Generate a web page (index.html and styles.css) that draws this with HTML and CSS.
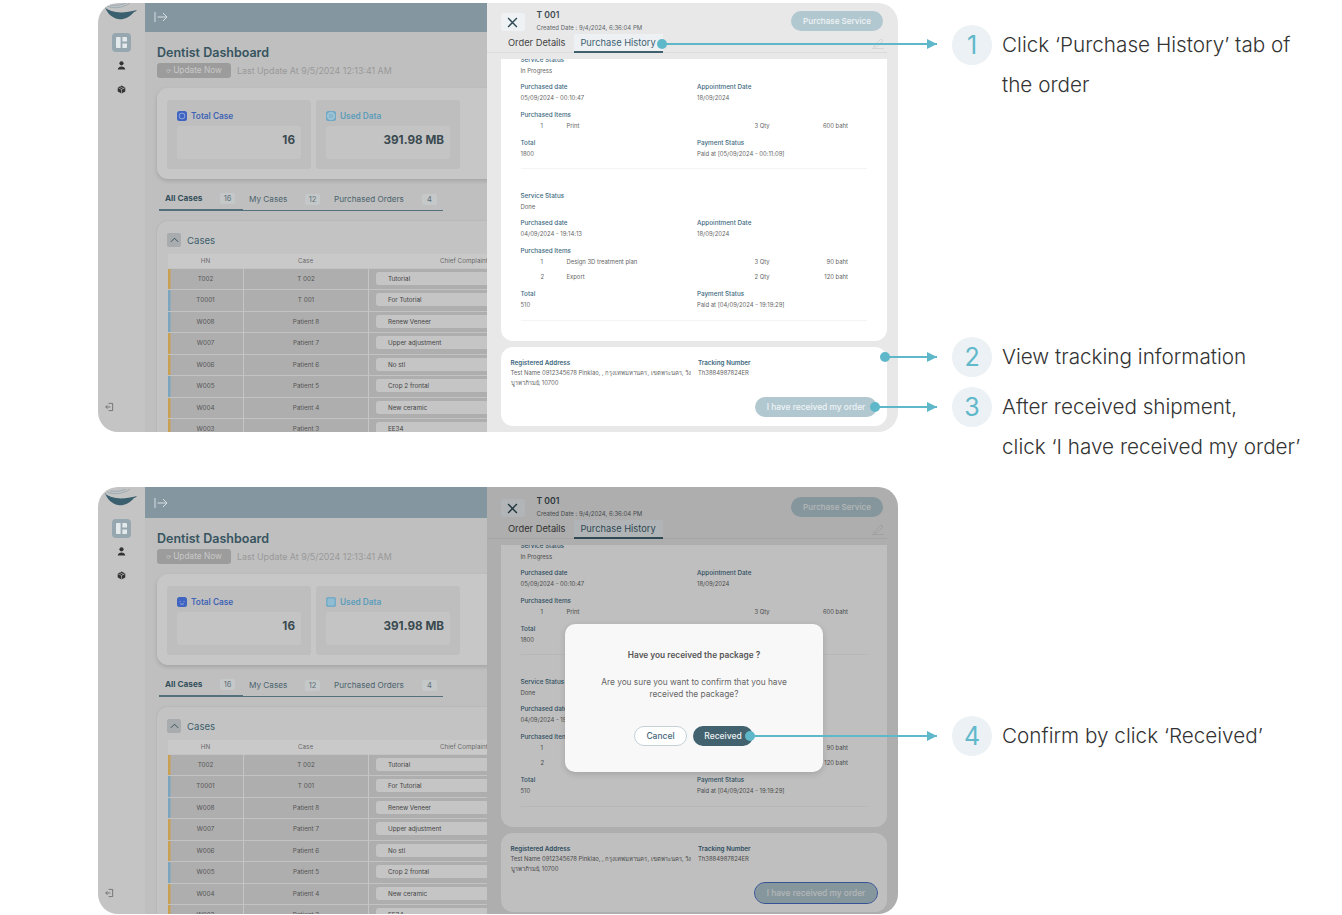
FILE: index.html
```html
<!DOCTYPE html>
<html lang="en">
<head>
<meta charset="utf-8">
<title>Purchase History guide</title>
<link rel="stylesheet" href="styles.css">
</head>
<body>
<main class="page">

<section class="row row-one">
  <div class="shot shot-one">
    <div class="app">
      <aside class="sidebar">
        <svg class="logo" viewBox="0 0 34 18"><path d="M1 4c6 6 17 7 32 3-1 1-2 2-3 2-5 6-11 8-16 7C8 15 3 10 1 4z" fill="#3a5f6e"/><path d="M2 5c8 5 20 3 30-1" fill="none" stroke="#c4c4c4" stroke-width=".9"/><path d="M3 3c7 3 16 2 23-3M6 2c6 1 12 0 16-2" fill="none" stroke="#8ba2ae" stroke-width=".7"/></svg>
        <span class="nav-active"><svg viewBox="0 0 12 12" class="nav-glyph"><path d="M0 1a1 1 0 0 1 1-1h4v12H1a1 1 0 0 1-1-1zM7 0h4a1 1 0 0 1 1 1v4H7zM7 7h5v4a1 1 0 0 1-1 1H7z" fill="#e4e9ec"/></svg></span>
        <svg class="nav-icon" viewBox="0 0 10 10"><circle cx="5" cy="2.6" r="2.3" fill="#333"/><path d="M.8 9.5C1 6.8 3 6 5 6s4 .8 4.200 3.500z" fill="#333"/></svg>
        <svg class="nav-icon nav-box" viewBox="0 0 10 10"><path d="M5 .5 9.200 2.700v4.600L5 9.500.8 7.300V2.700z" fill="#333"/><path d="M.8 2.700 5 5l4.200-2.300M5 5v4.500M3 1.600l4.200 2.300" stroke="#c3c3c3" stroke-width=".7" fill="none"/></svg>
        <svg class="nav-exit" viewBox="0 0 10 10"><path d="M4 1h4.500v8H4M6 5H.8M2.800 3 .8 5l2 2" fill="none" stroke="#666" stroke-width=".9"/></svg>
      </aside>
      <div class="main">
        <header class="topbar"><svg class="expand" viewBox="0 0 14 12"><path d="M1 1v10M3.500 6h9.500M9 2l4 4-4 4" fill="none" stroke="#d8dfe2" stroke-width="1"/></svg></header>
        <div class="content">
          <h1 class="title">Dentist Dashboard</h1>
          <div class="update-row"><span class="update-btn"><span class="spin">⟳</span>Update Now</span><span class="update-text">Last Update At 9/5/2024 12:13:41 AM</span></div>
          <div class="stats-card">
            <div class="stat"><div class="stat-label stat-blue"><svg class="stat-icon" viewBox="0 0 10 10"><rect width="10" height="10" rx="2.500" fill="#3f63c0"/><rect x="2.300" y="2.300" width="5.400" height="5.400" rx="2" fill="none" stroke="#a9bbe6" stroke-width=".8"/></svg>Total Case</div><div class="stat-value">16</div></div>
            <div class="stat"><div class="stat-label stat-teal"><svg class="stat-icon" viewBox="0 0 10 10"><rect width="10" height="10" rx="2.500" fill="#6ba6c2"/><rect x="2" y="2" width="6" height="6" rx="1" fill="none" stroke="#c6dbe5" stroke-width=".8"/><path d="M4 .5v9M6 .5v9M.5 4h9M.5 6h9" stroke="#c6dbe5" stroke-width=".4"/></svg>Used Data</div><div class="stat-value">391.98 MB</div></div>
          </div>
          <nav class="tabs">
            <span class="tab tab-on tab-a">All Cases<i class="chip">16</i></span>
            <span class="tab tab-b">My Cases<i class="chip">12</i></span>
            <span class="tab tab-c">Purchased Orders<i class="chip">4</i></span>
          </nav>
          <div class="cases">
            <div class="cases-head"><span class="toggle"><svg viewBox="0 0 10 6"><path d="M1 5l4-4 4 4" fill="none" stroke="#2f4a55" stroke-width="1"/></svg></span>Cases</div>
            <div class="table">
              <div class="thead"><span>HN</span><span>Case</span><span class="th-long">Chief Complaint</span></div>
              <div class="tr tr-o"><span>T002</span><span>T 002</span><span class="cc"><b>Tutorial</b></span></div>
              <div class="tr tr-b"><span>T0001</span><span>T 001</span><span class="cc"><b>For Tutorial</b></span></div>
              <div class="tr tr-b"><span>W008</span><span>Patient 8</span><span class="cc"><b>Renew Veneer</b></span></div>
              <div class="tr tr-o"><span>W007</span><span>Patient 7</span><span class="cc"><b>Upper adjustment</b></span></div>
              <div class="tr tr-o"><span>W006</span><span>Patient 6</span><span class="cc"><b>No stl</b></span></div>
              <div class="tr tr-b"><span>W005</span><span>Patient 5</span><span class="cc"><b>Crop 2 frontal</b></span></div>
              <div class="tr tr-o"><span>W004</span><span>Patient 4</span><span class="cc"><b>New ceramic</b></span></div>
              <div class="tr tr-o"><span>W003</span><span>Patient 3</span><span class="cc"><b>EE34</b></span></div>
            </div>
          </div>
        </div>
      </div>
      <div class="panel">
        <div class="panel-head">
          <span class="close"><svg viewBox="0 0 10 10"><path d="M1 1l8 8M9 1 1 9" stroke="#2f4a55" stroke-width="1.300" fill="none"/></svg></span>
          <div class="order-id"><strong>T 001</strong><small>Created Date : 9/4/2024, 6:36:04 PM</small></div>
          <span class="buy">Purchase Service</span>
        </div>
        <div class="panel-tabs">
          <span class="ptab">Order Details</span>
          <span class="ptab ptab-on">Purchase History</span>
          <svg class="pencil" viewBox="0 0 14 12"><path d="M3 9 10 2l2 2-7 6H2zM1 11.500h12" fill="none" stroke="#d0d0d0" stroke-width=".8"/></svg>
        </div>
        <div class="orders">
          <div class="order order-first">
            <div class="f"><em>Service Status</em><p>In Progress</p></div>
            <div class="two"><div class="f"><em>Purchased date</em><p>05/09/2024 - 00:10:47</p></div><div class="f"><em>Appointment Date</em><p>18/09/2024</p></div></div>
            <div class="f"><em>Purchased Items</em><div class="item"><span>1</span><span>Print</span><span>3 Qty</span><span>600 baht</span></div></div>
            <div class="two"><div class="f"><em>Total</em><p>1800</p></div><div class="f"><em>Payment Status</em><p>Paid at [05/09/2024 - 00:11:09]</p></div></div>
          </div>
          <div class="order">
            <div class="f"><em>Service Status</em><p>Done</p></div>
            <div class="two"><div class="f"><em>Purchased date</em><p>04/09/2024 - 19:14:13</p></div><div class="f"><em>Appointment Date</em><p>18/09/2024</p></div></div>
            <div class="f"><em>Purchased Items</em><div class="item"><span>1</span><span>Design 3D treatment plan</span><span>3 Qty</span><span>90 baht</span></div><div class="item item-next"><span>2</span><span>Export</span><span>2 Qty</span><span>120 baht</span></div></div>
            <div class="two"><div class="f"><em>Total</em><p>510</p></div><div class="f"><em>Payment Status</em><p>Paid at [04/09/2024 - 19:19:29]</p></div></div>
          </div>
        </div>
        <div class="ship">
          <div class="ship-grid">
            <div class="f"><em>Registered Address</em><p>Test Name 0912345678 Pinklao, , กรุงเทพมหานคร, เขตพระนคร, วัง<br>บูรพาภิรมย์, 10700</p></div>
            <div class="f"><em>Tracking Number</em><p>Th3884987824ER</p></div>
          </div>
          <span class="got">I have received my order</span>
        </div>
      </div>
    </div>
  </div>
  <div class="steps steps-one">
    <div class="step step-1"><span class="num">1</span><p>Click ‘Purchase History’ tab of<br>the order</p></div>
    <div class="step step-2"><span class="num">2</span><p>View tracking information</p></div>
    <div class="step step-3"><span class="num">3</span><p>After received shipment,<br>click ‘I have received my order’</p></div>
  </div>
  <span class="callout c1"></span>
  <span class="callout c2"></span>
  <span class="callout c3"></span>
</section>

<section class="row row-two">
  <div class="shot shot-two">
    <div class="app">
      <aside class="sidebar">
        <svg class="logo" viewBox="0 0 34 18"><path d="M1 4c6 6 17 7 32 3-1 1-2 2-3 2-5 6-11 8-16 7C8 15 3 10 1 4z" fill="#3a5f6e"/><path d="M2 5c8 5 20 3 30-1" fill="none" stroke="#c4c4c4" stroke-width=".9"/><path d="M3 3c7 3 16 2 23-3M6 2c6 1 12 0 16-2" fill="none" stroke="#8ba2ae" stroke-width=".7"/></svg>
        <span class="nav-active"><svg viewBox="0 0 12 12" class="nav-glyph"><path d="M0 1a1 1 0 0 1 1-1h4v12H1a1 1 0 0 1-1-1zM7 0h4a1 1 0 0 1 1 1v4H7zM7 7h5v4a1 1 0 0 1-1 1H7z" fill="#e4e9ec"/></svg></span>
        <svg class="nav-icon" viewBox="0 0 10 10"><circle cx="5" cy="2.6" r="2.3" fill="#333"/><path d="M.8 9.5C1 6.8 3 6 5 6s4 .8 4.200 3.500z" fill="#333"/></svg>
        <svg class="nav-icon nav-box" viewBox="0 0 10 10"><path d="M5 .5 9.200 2.700v4.600L5 9.500.8 7.300V2.700z" fill="#333"/><path d="M.8 2.700 5 5l4.200-2.300M5 5v4.500M3 1.600l4.200 2.300" stroke="#c3c3c3" stroke-width=".7" fill="none"/></svg>
        <svg class="nav-exit" viewBox="0 0 10 10"><path d="M4 1h4.500v8H4M6 5H.8M2.800 3 .8 5l2 2" fill="none" stroke="#666" stroke-width=".9"/></svg>
      </aside>
      <div class="main">
        <header class="topbar"><svg class="expand" viewBox="0 0 14 12"><path d="M1 1v10M3.500 6h9.500M9 2l4 4-4 4" fill="none" stroke="#d8dfe2" stroke-width="1"/></svg></header>
        <div class="content">
          <h1 class="title">Dentist Dashboard</h1>
          <div class="update-row"><span class="update-btn"><span class="spin">⟳</span>Update Now</span><span class="update-text">Last Update At 9/5/2024 12:13:41 AM</span></div>
          <div class="stats-card">
            <div class="stat"><div class="stat-label stat-blue"><svg class="stat-icon" viewBox="0 0 10 10"><rect width="10" height="10" rx="2.500" fill="#3f63c0"/><path d="M3 4v1M7 4v1M3 6.500c1 1 3 1 4 0" fill="none" stroke="#a9bbe6" stroke-width=".8"/></svg>Total Case</div><div class="stat-value">16</div></div>
            <div class="stat"><div class="stat-label stat-teal"><svg class="stat-icon" viewBox="0 0 10 10"><rect width="10" height="10" rx="2.500" fill="#6ba6c2"/><path d="M3 .5v9M5 .5v9M7 .5v9M.5 3h9M.5 5h9M.5 7h9" stroke="#c6dbe5" stroke-width=".5"/></svg>Used Data</div><div class="stat-value">391.98 MB</div></div>
          </div>
          <nav class="tabs">
            <span class="tab tab-on tab-a">All Cases<i class="chip">16</i></span>
            <span class="tab tab-b">My Cases<i class="chip">12</i></span>
            <span class="tab tab-c">Purchased Orders<i class="chip">4</i></span>
          </nav>
          <div class="cases">
            <div class="cases-head"><span class="toggle"><svg viewBox="0 0 10 6"><path d="M1 5l4-4 4 4" fill="none" stroke="#2f4a55" stroke-width="1"/></svg></span>Cases</div>
            <div class="table">
              <div class="thead"><span>HN</span><span>Case</span><span class="th-long">Chief Complaint</span></div>
              <div class="tr tr-o"><span>T002</span><span>T 002</span><span class="cc"><b>Tutorial</b></span></div>
              <div class="tr tr-b"><span>T0001</span><span>T 001</span><span class="cc"><b>For Tutorial</b></span></div>
              <div class="tr tr-b"><span>W008</span><span>Patient 8</span><span class="cc"><b>Renew Veneer</b></span></div>
              <div class="tr tr-o"><span>W007</span><span>Patient 7</span><span class="cc"><b>Upper adjustment</b></span></div>
              <div class="tr tr-o"><span>W006</span><span>Patient 6</span><span class="cc"><b>No stl</b></span></div>
              <div class="tr tr-b"><span>W005</span><span>Patient 5</span><span class="cc"><b>Crop 2 frontal</b></span></div>
              <div class="tr tr-o"><span>W004</span><span>Patient 4</span><span class="cc"><b>New ceramic</b></span></div>
              <div class="tr tr-o"><span>W003</span><span>Patient 3</span><span class="cc"><b>EE34</b></span></div>
            </div>
          </div>
        </div>
      </div>
      <div class="panel">
        <div class="panel-head">
          <span class="close"><svg viewBox="0 0 10 10"><path d="M1 1l8 8M9 1 1 9" stroke="#2f4a55" stroke-width="1.300" fill="none"/></svg></span>
          <div class="order-id"><strong>T 001</strong><small>Created Date : 9/4/2024, 6:36:04 PM</small></div>
          <span class="buy">Purchase Service</span>
        </div>
        <div class="panel-tabs">
          <span class="ptab">Order Details</span>
          <span class="ptab ptab-on">Purchase History</span>
          <svg class="pencil" viewBox="0 0 14 12"><path d="M3 9 10 2l2 2-7 6H2zM1 11.500h12" fill="none" stroke="#d0d0d0" stroke-width=".8"/></svg>
        </div>
        <div class="orders">
          <div class="order order-first">
            <div class="f"><em>Service Status</em><p>In Progress</p></div>
            <div class="two"><div class="f"><em>Purchased date</em><p>05/09/2024 - 00:10:47</p></div><div class="f"><em>Appointment Date</em><p>18/09/2024</p></div></div>
            <div class="f"><em>Purchased Items</em><div class="item"><span>1</span><span>Print</span><span>3 Qty</span><span>600 baht</span></div></div>
            <div class="two"><div class="f"><em>Total</em><p>1800</p></div><div class="f"><em>Payment Status</em><p>Paid at [05/09/2024 - 00:11:09]</p></div></div>
          </div>
          <div class="order">
            <div class="f"><em>Service Status</em><p>Done</p></div>
            <div class="two"><div class="f"><em>Purchased date</em><p>04/09/2024 - 19:14:13</p></div><div class="f"><em>Appointment Date</em><p>18/09/2024</p></div></div>
            <div class="f"><em>Purchased Items</em><div class="item"><span>1</span><span>Design 3D treatment plan</span><span>3 Qty</span><span>90 baht</span></div><div class="item item-next"><span>2</span><span>Export</span><span>2 Qty</span><span>120 baht</span></div></div>
            <div class="two"><div class="f"><em>Total</em><p>510</p></div><div class="f"><em>Payment Status</em><p>Paid at [04/09/2024 - 19:19:29]</p></div></div>
          </div>
        </div>
        <div class="ship">
          <div class="ship-grid">
            <div class="f"><em>Registered Address</em><p>Test Name 0912345678 Pinklao, , กรุงเทพมหานคร, เขตพระนคร, วัง<br>บูรพาภิรมย์, 10700</p></div>
            <div class="f"><em>Tracking Number</em><p>Th3884987824ER</p></div>
          </div>
          <span class="got got-focus">I have received my order</span>
        </div>
        <div class="dim">
          <div class="modal">
            <h2>Have you received the package ?</h2>
            <p>Are you sure you want to confirm that you have<br>received the package?</p>
            <div class="modal-actions"><span class="cancel">Cancel</span><span class="received">Received</span></div>
          </div>
        </div>
      </div>
    </div>
  </div>
  <div class="steps steps-two">
    <div class="step step-4"><span class="num">4</span><p>Confirm by click ‘Received’</p></div>
  </div>
  <span class="callout c4"></span>
</section>

</main>
</body>
</html>
```
FILE: styles.css
```css
* { box-sizing: border-box; }
html, body { margin: 0; padding: 0; background: #fff; overflow: hidden; }
body { font-family: Inter, "Noto Sans", "Noto Sans CJK SC", "DejaVu Sans", sans-serif; color: #333; }
h1, h2, p { margin: 0; }
em, i { font-style: normal; }

.page { padding: 3px 0 0 98px; height: 915px; }
.row { position: relative; display: grid; grid-template-columns: 800px 1fr; column-gap: 54px; align-items: start; }
.row-one { height: 429px; }
.row-two { height: 427px; margin-top: 55px; }

/* screenshot frames */
.shot { position: relative; overflow: hidden; border-radius: 20px; }
.shot-one { height: 429px; }
.shot-two { height: 427px; }
.shot-one .app { margin-top: -2px; }
.app { display: flex; width: 800px; height: 432px; }

/* sidebar */
.sidebar { position: relative; width: 47px; flex: none; background: #c4c4c4; display: flex; flex-direction: column; align-items: center; padding-top: 2px; }
.logo { width: 34px; height: 18px; margin-left: -1px; }
.nav-active { width: 19px; height: 19px; margin-top: 12px; border-radius: 4px; background: #96a7b0; display: flex; align-items: center; justify-content: center; }
.nav-glyph { width: 11px; height: 11px; }
.nav-icon { width: 9px; height: 9px; margin-top: 9px; }
.nav-box { margin-top: 15px; }
.nav-exit { position: absolute; left: 7px; top: 401px; width: 9px; height: 10px; }

/* main column */
.main { width: 342px; flex: none; overflow: hidden; background: #bfbfbf; }
.topbar { height: 31px; background: #84969f; display: flex; align-items: center; padding-left: 9px; }
.expand { width: 14px; height: 12px; }
.content { padding: 14px 0 0 12px; }
.title { font-size: 12.500px; line-height: 13px; font-weight: 600; color: #37545f; }
.update-row { display: flex; align-items: center; margin-top: 4px; height: 15px; }
.update-btn { display: flex; justify-content: center; gap: 2px; width: 74px; height: 15px; border-radius: 3px; background: #9c9c9c; color: #c8c8c8; font-size: 8.300px; line-height: 15px; white-space: nowrap; }
.spin { font-size: 6px; }
.update-text { margin-left: 6px; font-size: 8.850px; color: #999; white-space: nowrap; }

.stats-card { display: flex; gap: 5px; width: 340px; height: 91px; margin-top: 10px; padding: 12px 10px; border-radius: 11px 0 0 11px; background: #c7c7c7; box-shadow: 0 2px 4px rgba(0,0,0,.14); }
.stat { width: 144px; height: 69px; border-radius: 3px; background: #bebebe; padding: 10px 10px; flex: none; }
.stat-label { display: flex; align-items: center; gap: 4px; height: 11px; font-size: 8.300px; font-weight: 600; white-space: nowrap; }
.stat-blue { color: #3f63b5; }
.stat-teal { color: #5c9dbb; }
.stat-icon { width: 10px; height: 10px; flex: none; }
.stat-value { height: 33px; margin-top: 5px; border-radius: 3px; background: #c4c4c4; text-align: right; padding-right: 6px; font-size: 11.700px; line-height: 29px; font-weight: 700; color: #3a4a50; }

.tabs { display: flex; width: 284px; height: 23px; margin: 9px 0 0 2px; border-bottom: 1px solid #54707c; }
.tab { display: flex; align-items: center; justify-content: space-between; height: 23px; padding: 0 8px 1px 6px; font-size: 8.200px; color: #4b636d; white-space: nowrap; }
.tab-a { width: 84px; }
.tab-b { width: 85px; }
.tab-c { width: 115px; padding-right: 6px; }
.tab-on { font-weight: 700; color: #33505b; border-bottom: 2px solid #54707c; }
.chip { width: 15px; height: 11px; border-radius: 2px; background: #c4c8c9; font-size: 7.500px; line-height: 11px; text-align: center; font-weight: 400; color: #5c6f77; }

.cases { width: 340px; margin-top: 10px; padding: 12px 0 0 11px; border-radius: 10px 0 0 0; background: #c3c3c3; box-shadow: 0 0 2px rgba(0,0,0,.12); }
.cases-head { display: flex; align-items: center; gap: 6px; height: 14px; margin-left: -1px; font-size: 9.600px; color: #3d5f6c; }
.toggle { width: 14px; height: 14px; border-radius: 2px; background: #a8acae; display: flex; align-items: center; justify-content: center; }
.toggle svg { width: 9px; height: 6px; }
.table { margin: 7px 0 0 0; }
.thead, .tr { display: grid; grid-template-columns: 75px 125px 240px; text-align: center; font-size: 6.300px; color: #555; white-space: nowrap; }
.thead { height: 13.800px; line-height: 14.800px; background: #c9c9c9; color: #6a6a6a; }
.th-long { text-align: left; padding-left: 72px; }
.tr { height: 20.500px; line-height: 20.500px; margin-top: 1px; background: #aeaeae; }
.tr > span + span { border-left: 1px solid #c6c6c6; }
.tr-o { box-shadow: inset 2.500px 0 0 #c9a052; }
.tr-b { box-shadow: inset 2.500px 0 0 #7ba5be; }
.cc { padding: 3px 0 0 7px; text-align: left; }
.cc b { display: block; height: 13px; line-height: 14.500px; padding-left: 12px; border-radius: 3px; background: #c5c5c5; color: #444; font-weight: 400; }

/* right panel */
.panel { position: relative; width: 411px; flex: none; display: flex; flex-direction: column; padding: 0 11px 0 13.500px; background: #e8e8e8; }
.panel-head { display: flex; height: 33px; align-items: flex-start; }
.close { width: 24px; height: 18px; margin: 12px 0 0 0; border-radius: 3px; background: #eef2f4; display: flex; align-items: center; justify-content: center; flex: none; }
.close svg { width: 11px; height: 11px; }
.order-id { margin: 8px 0 0 12px; display: flex; flex-direction: column; }
.order-id strong { font-size: 8.600px; line-height: 12px; font-weight: 600; color: #3d4b50; }
.order-id small { margin-top: 2px; font-size: 6px; line-height: 9px; color: #5e6669; }
.buy { margin: 10px 4px 0 auto; width: 92px; height: 20px; border-radius: 10px; background: #b2c8d1; color: #f0f4f5; font-size: 8.100px; line-height: 21px; text-align: center; font-weight: 500; }
.panel-tabs { position: relative; display: flex; height: 19px; margin-left: -13.500px; padding-left: 21px; border-bottom: 1px solid #dcdcdc; width: 400px; }
.ptab { font-size: 9.300px; line-height: 18px; color: #444; white-space: nowrap; }
.ptab-on { width: 89px; margin-left: 8px; text-align: center; height: 19px; color: #3f6272; background: #edf1f3; border-bottom: 2px solid #40606e; }
.pencil { position: absolute; right: 2px; top: 3px; width: 14px; height: 12px; }

.orders { height: 282px; margin-top: 6px; overflow: hidden; border-radius: 0 0 12px 12px; background: #fff; padding: 0 20px; }
.order { padding-top: 27px; height: 152px; border-bottom: 1px solid #f4f4f4; }
.order + .order { height: 152px; padding-top: 20.500px; }
.order-first { margin-top: -5.500px; height: 115.500px; padding-top: 0; }
.f { margin-bottom: 5.500px; }
.f:has(.item) { margin-bottom: 6.500px; }
.f em, .f p, .item { display: block; font-size: 5.900px; line-height: 11px; white-space: nowrap; }
.f em { color: #3e6a80; font-weight: 500; font-size: 6.300px; line-height: 12px; }
.f p { color: #666; line-height: 10px; }
.two { display: grid; grid-template-columns: 176.500px 1fr; }
.item { display: grid; grid-template-columns: 26px 188px 50px 1fr; height: 10px; line-height: 10px; padding-left: 20px; padding-right: 19px; color: #666; }
.item span:last-child { text-align: right; }
.item-next { margin-top: 5px; }

.ship { position: relative; height: 79px; margin-top: 6px; border-radius: 12px; background: #fff; padding: 10px 10px 0; }
.ship-grid { display: grid; grid-template-columns: 187.500px 1fr; }
.ship .f em { font-weight: 600; }
.ship .f p { margin-top: -1px; }
.got { position: absolute; right: 10px; top: 50px; width: 122px; height: 20px; border-radius: 10px; background: #b2c8d1; color: #f0f4f5; font-size: 8.400px; line-height: 20px; text-align: center; font-weight: 500; }
.got-focus { outline: 1.500px solid #4a6fc4; }

.dim { position: absolute; inset: 0; display: flex; align-items: center; justify-content: center; padding: 0 0 10px 3px; background: rgba(0,0,0,.25); }
.modal { width: 258px; height: 148px; border-radius: 10px; background: #f8f8f8; box-shadow: 0 2px 6px rgba(0,0,0,.15); text-align: center; padding-top: 25px; }
.modal h2 { font-size: 8.300px; line-height: 12px; font-weight: 600; color: #555; }
.modal p { margin-top: 15px; font-size: 8.300px; line-height: 12px; color: #666; }
.modal-actions { display: flex; justify-content: center; gap: 6px; margin-top: 26px; padding-right: 1px; }
.cancel, .received { height: 20px; border-radius: 10px; font-size: 8.500px; font-weight: 500; }
.cancel { width: 53px; line-height: 18px; border: 1px solid #c4d2d8; color: #46687a; background: #fff; }
.received { width: 60px; line-height: 20px; background: #42626f; color: #eef2f3; }

/* step list */
.steps { display: flex; flex-direction: column; }
.step { display: flex; gap: 10px; }
.step-1 { margin-top: 22px; }
.step-2 { margin-top: 232px; }
.step-3 { margin-top: 10px; }
.step-4 { margin-top: 229px; }
.num { width: 40px; height: 40px; border-radius: 50%; flex: none; background: #ebf1f4; color: #61b8cb; font-size: 25px; line-height: 40px; text-align: center; font-weight: 400; }
.step p { font-size: 20.700px; line-height: 40px; font-weight: 300; color: #333; white-space: nowrap; }

/* connector lines that lie over the screenshots */
.callout { position: absolute; height: 2px; background: #5fb7ca; }
.callout::before { content: ""; position: absolute; left: -5px; top: -4px; width: 10px; height: 10px; border-radius: 50%; background: #5fb7ca; }
.callout::after { content: ""; position: absolute; right: 0; top: -4px; border-left: 10px solid #5fb7ca; border-top: 5px solid transparent; border-bottom: 5px solid transparent; }
.c1 { left: 564px; top: 40px; width: 275px; }
.c2 { left: 787px; top: 353px; width: 52px; }
.c3 { left: 777px; top: 403px; width: 62px; }
.c4 { left: 652px; top: 248px; width: 187px; }
```
